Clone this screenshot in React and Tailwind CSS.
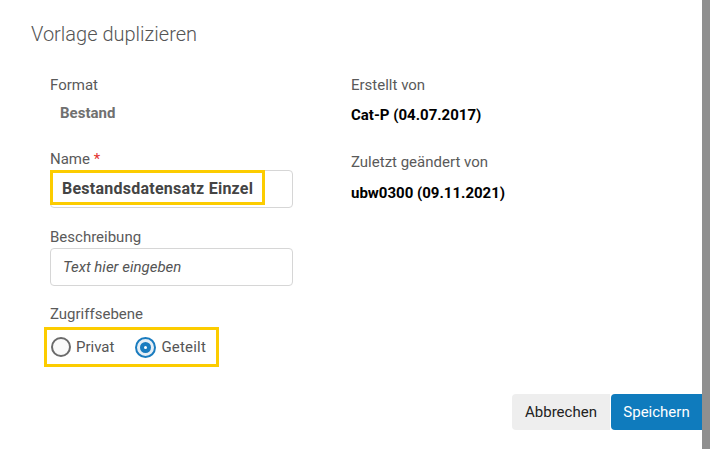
import React from 'react';

export default function App() {
  return (
    <div className="flex w-[710px] h-[449px] bg-white font-['Roboto',sans-serif] text-[15px]">
      {/* Dialog */}
      <div className="relative w-[702px] h-full bg-white">
        <h1 className="pl-[31px] pt-[21px] text-[20px] leading-[26px] font-light text-[#555]">Vorlage duplizieren</h1>

        <div className="flex mt-[28px]">
          {/* Left column */}
          <div className="w-[351px] pl-[50px] flex flex-col">
            <span className="leading-[20px] text-[#5a5a5a]">Format</span>
            <span className="mt-[8px] pl-[10px] leading-[20px] font-bold text-[#707070]">Bestand</span>

            <span className="mt-[26px] leading-[20px] text-[#5a5a5a]">
              Name <span className="text-[#e3342f]">*</span>
            </span>
            <div className="relative mt-[1px] w-[243px] h-[38px] border border-[#d6d6d6] rounded-[4px] flex items-center pl-[11px]">
              <span className="text-[16px] tracking-[0.25px] font-bold text-[#444]">Bestandsdatensatz Einzel</span>
              <div className="absolute left-[-1px] top-[-1px] w-[215px] h-[35px] border-[3px] border-[#fccc00]" />
            </div>

            <span className="mt-[19px] leading-[20px] text-[#5a5a5a]">Beschreibung</span>
            <div className="mt-[1px] w-[243px] h-[38px] border border-[#d6d6d6] rounded-[4px] flex items-center pl-[12px]">
              <span className="italic text-[#555]">Text hier eingeben</span>
            </div>

            <span className="mt-[18px] leading-[20px] text-[#5a5a5a]">Zugriffsebene</span>
            <div className="mt-[3px] -ml-[6px] w-[175px] h-[40px] border-[3px] border-[#fccc00] flex items-center pl-[4px] text-[#555]">
              <span className="w-[20px] h-[20px] rounded-full border-2 border-[#6b6b6b] bg-[#fafafa]" />
              <span className="ml-[5px]">Privat</span>
              <span className="ml-[21px] w-[21px] h-[21px] rounded-full border-2 border-[#1a7cbf] bg-[#e6eef5] flex items-center justify-center">
                <span className="w-[11px] h-[11px] rounded-full bg-[#1a7cbf] flex items-center justify-center">
                  <span className="w-[3px] h-[3px] rounded-full bg-white" />
                </span>
              </span>
              <span className="ml-[5px] tracking-[0.2px]">Geteilt</span>
            </div>
          </div>

          {/* Right column */}
          <div className="flex flex-col">
            <span className="leading-[20px] text-[#5a5a5a]">Erstellt von</span>
            <span className="mt-[10px] leading-[20px] font-bold text-black">Cat-P (04.07.2017)</span>
            <span className="mt-[26px] leading-[20px] text-[#5a5a5a] translate-y-[1px]">Zuletzt geändert von</span>
            <span className="mt-[12px] leading-[20px] font-bold text-black">ubw0300 (09.11.2021)</span>
          </div>
        </div>

        {/* Footer buttons */}
        <div className="flex justify-end mt-[27px]">
          <button className="w-[98px] h-[36px] bg-[#eeeeee] rounded-l-[4px] text-[#222]">Abbrechen</button>
          <button className="ml-[1px] w-[91px] h-[36px] bg-[#0f7bbd] rounded-l-[4px] text-white">Speichern</button>
        </div>
      </div>

      {/* Backdrop scrollbar strip */}
      <div className="w-[8px] h-full bg-[#8f8f8f]" />
    </div>
  );
}
